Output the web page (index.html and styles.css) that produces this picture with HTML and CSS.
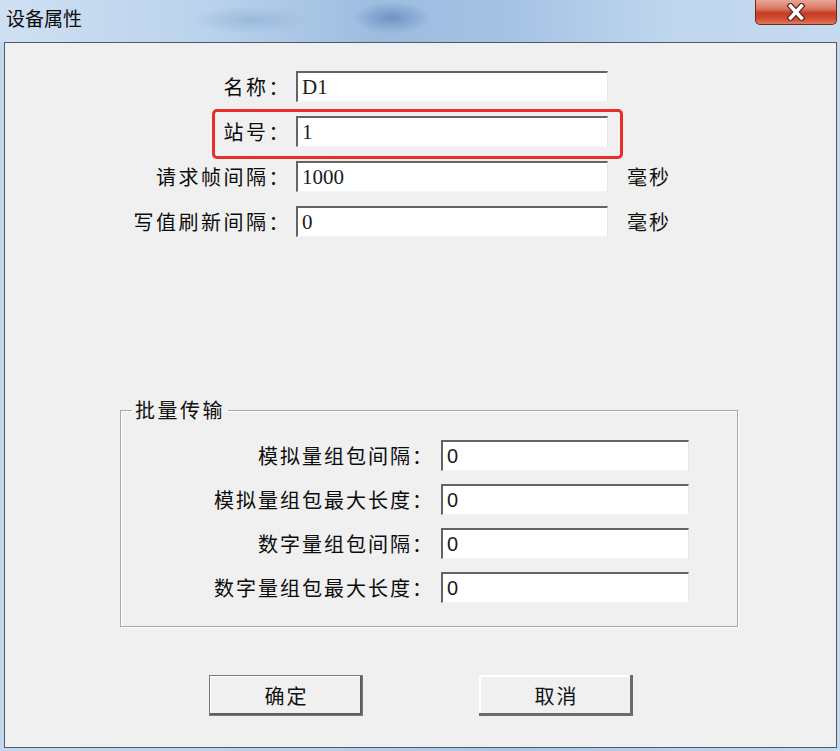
FILE: index.html
```html
<!DOCTYPE html>
<html lang="zh-CN">
<head>
    <meta charset="UTF-8">
    <title>设备属性</title>
    <link rel="stylesheet" href="styles.css">
</head>
<body>
    <div class="window">
        <div class="titlebar">
            <span class="title">设备属性</span>
            <span class="close">
                <svg width="18" height="18" viewBox="0 0 18 18">
                    <path d="M3.5 3 L14.5 15 M14.5 3 L3.5 15" stroke="#5a2018" stroke-width="6" stroke-linecap="square" fill="none"/>
                    <path d="M3.5 3 L14.5 15 M14.5 3 L3.5 15" stroke="#ffffff" stroke-width="3.5" stroke-linecap="square" fill="none"/>
                </svg>
            </span>
        </div>

        <div class="client">
            <div class="form">
                <div class="row">
                    <label>名称：</label>
                    <input class="field" type="text" value="D1">
                </div>
                <div class="row marked">
                    <label>站号：</label>
                    <input class="field" type="text" value="1">
                </div>
                <div class="row">
                    <label>请求帧间隔：</label>
                    <input class="field" type="text" value="1000">
                    <span class="unit">毫秒</span>
                </div>
                <div class="row">
                    <label>写值刷新间隔：</label>
                    <input class="field" type="text" value="0">
                    <span class="unit">毫秒</span>
                </div>
            </div>

            <fieldset class="batch">
                <legend>批量传输</legend>
                <div class="batch-grid">
                    <label>模拟量组包间隔：</label>
                    <input class="field sans" type="text" value="0">
                    <label>模拟量组包最大长度：</label>
                    <input class="field sans" type="text" value="0">
                    <label>数字量组包间隔：</label>
                    <input class="field sans" type="text" value="0">
                    <label>数字量组包最大长度：</label>
                    <input class="field sans" type="text" value="0">
                </div>
            </fieldset>

            <div class="actions">
                <button class="btn default">确定</button>
                <button class="btn">取消</button>
            </div>
        </div>
    </div>
</body>
</html>
```

FILE: styles.css
```css
body {
    margin: 0;
    background: #bcd3ec;
    font-family: "Noto Sans CJK SC", sans-serif;
    color: #111;
}
.window {
    width: 840px;
    height: 751px;
    display: flex;
    flex-direction: column;
    background: linear-gradient(90deg, #c3d8ee 0%, #b7cfe9 40%, #a9c5e6 60%, #c4d9ef 100%);
}
.titlebar {
    height: 42px;
    flex-shrink: 0;
    display: flex;
    justify-content: space-between;
    align-items: flex-start;
    padding: 0 3px 0 6px;
    background:
        radial-gradient(ellipse 40px 16px at 392px 18px, rgba(80,120,175,0.6), rgba(80,120,175,0) 100%),
        radial-gradient(ellipse 60px 14px at 250px 20px, rgba(110,150,195,0.35), rgba(110,150,195,0) 100%),
        linear-gradient(90deg, #cfe0f2 0%, #bad2ec 25%, #9dbce0 45%, #a5c2e4 60%, #bfd6ee 80%, #c6daf0 100%);
}
.title {
    font-size: 19px;
    line-height: 20px;
    margin-top: 8px;
    color: #0a0a0a;
}
.close {
    width: 82px;
    height: 25px;
    box-sizing: border-box;
    display: flex;
    align-items: center;
    justify-content: center;
    border: 1px solid #6d2a1f;
    border-top: none;
    border-radius: 0 0 5px 5px;
    background: linear-gradient(180deg, #e9a797 0%, #d97a64 35%, #c73b23 55%, #d24f35 80%, #e17a5e 100%);
}
.client {
    flex: 1;
    margin: 0 3px 3px 4px;
    border: 1px solid #4d5b69;
    background: #f0f0f0;
    display: flex;
    flex-direction: column;
}
label {
    font-size: 20px;
    letter-spacing: 2.5px;
    text-align: right;
    white-space: nowrap;
    margin-right: -4px;
    color: #0c0c0c;
}
.form {
    padding-top: 28px;
    display: flex;
    flex-direction: column;
    gap: 14px;
}
.row {
    display: grid;
    grid-template-columns: 282px 312px auto;
    column-gap: 9px;
    align-items: center;
    height: 31px;
    position: relative;
}
.marked::after {
    content: "";
    position: absolute;
    left: 207px;
    top: -7px;
    width: 411px;
    height: 50px;
    box-sizing: border-box;
    border: 3.5px solid #e5302a;
    border-radius: 5px;
}
.field {
    box-sizing: border-box;
    height: 31px;
    width: 100%;
    margin: 0;
    padding: 0 0 0 4px;
    border-style: solid;
    border-width: 2px 1px 1px 2px;
    border-color: #646464 #e6e6e6 #f4f4f4 #646464;
    background: #fff;
    font-family: "Liberation Serif", serif;
    font-size: 21px;
    color: #1a1a1a;
    outline: none;
}
.field.sans {
    font-family: "Liberation Sans", sans-serif;
    font-size: 20px;
}
.unit {
    font-size: 20px;
    letter-spacing: 2px;
    margin-left: 10px;
}
.batch {
    margin: 162px 0 0 115px;
    width: 618px;
    box-sizing: border-box;
    padding: 19px 0 23px 0;
    border: 1px solid #a8a8a8;
    box-shadow: inset 1px 1px 0 #fff, 1px 1px 0 #fff;
}
.batch legend {
    font-size: 20px;
    line-height: 22px;
    letter-spacing: 2.5px;
    margin-left: 11px;
    padding: 0 3px;
}
.batch-grid {
    display: grid;
    grid-template-columns: 309px 248px;
    column-gap: 11px;
    row-gap: 13px;
    align-items: center;
}
.batch-grid label {
    letter-spacing: 2px;
}
.actions {
    margin-top: 48px;
    display: flex;
    justify-content: center;
    gap: 116px;
}
.btn {
    width: 154px;
    height: 41px;
    border: none;
    background: #f0f0f0;
    font-family: "Noto Sans CJK SC", sans-serif;
    font-size: 20px;
    letter-spacing: 2px;
    text-indent: 2px;
    color: #111;
    box-shadow: inset -3px -3px 0 #6a6a6a, inset 2px 2px 0 #fff;
}
.btn.default {
    border: 1px solid #7a7a7a;
    box-shadow: inset -2px -2px 0 #5e5e5e, inset 1px 1px 0 #fff;
}
```
